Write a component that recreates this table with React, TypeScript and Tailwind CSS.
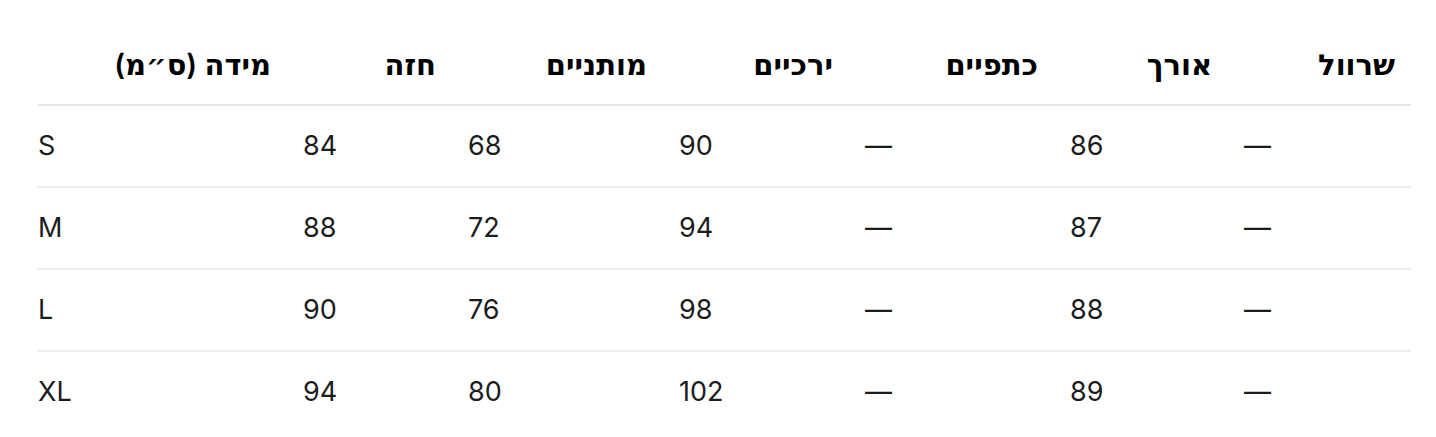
const headers = ["מידה (ס״מ)", "חזה", "מותניים", "ירכיים", "כתפיים", "אורך", "שרוול"];

const rows = [
  ["S", "84", "68", "90", "—", "86", "—"],
  ["M", "88", "72", "94", "—", "87", "—"],
  ["L", "90", "76", "98", "—", "88", "—"],
  ["XL", "94", "80", "102", "—", "89", "—"],
];

const widths = ["w-[249px]", "w-[165px]", "w-[211px]", "w-[186px]", "w-[205px]", "w-[174px]", "w-[183px]"];

export default function App() {
  return (
    <div className="min-h-[437px] bg-white pt-[25px] font-['Inter','Noto_Sans','DejaVu_Sans',sans-serif] text-[27px] text-[#1c1c1c]">
      <table className="ml-[38px] w-[1373px] table-fixed border-collapse">
        <colgroup>
          {widths.map((w, i) => (
            <col key={i} className={w} />
          ))}
        </colgroup>
        <thead>
          <tr className="border-b-2 border-[#e4e4e4]">
            {headers.map((h, i) => (
              <th
                key={h}
                className={`py-5 pr-4 text-right text-[29px] font-semibold leading-[39px] text-black ${i === 0 ? "pl-0" : "pl-4"}`}
              >
                {h}
              </th>
            ))}
          </tr>
        </thead>
        <tbody>
          {rows.map((row, r) => (
            <tr key={row[0]} className={r < rows.length - 1 ? "border-b-2 border-[#ececec]" : ""}>
              {row.map((cell, i) => (
                <td key={i} className={`py-5 pr-4 text-left leading-[40px] ${i === 0 ? "pl-0" : "pl-4"}`}>
                  {cell}
                </td>
              ))}
            </tr>
          ))}
        </tbody>
      </table>
    </div>
  );
}
